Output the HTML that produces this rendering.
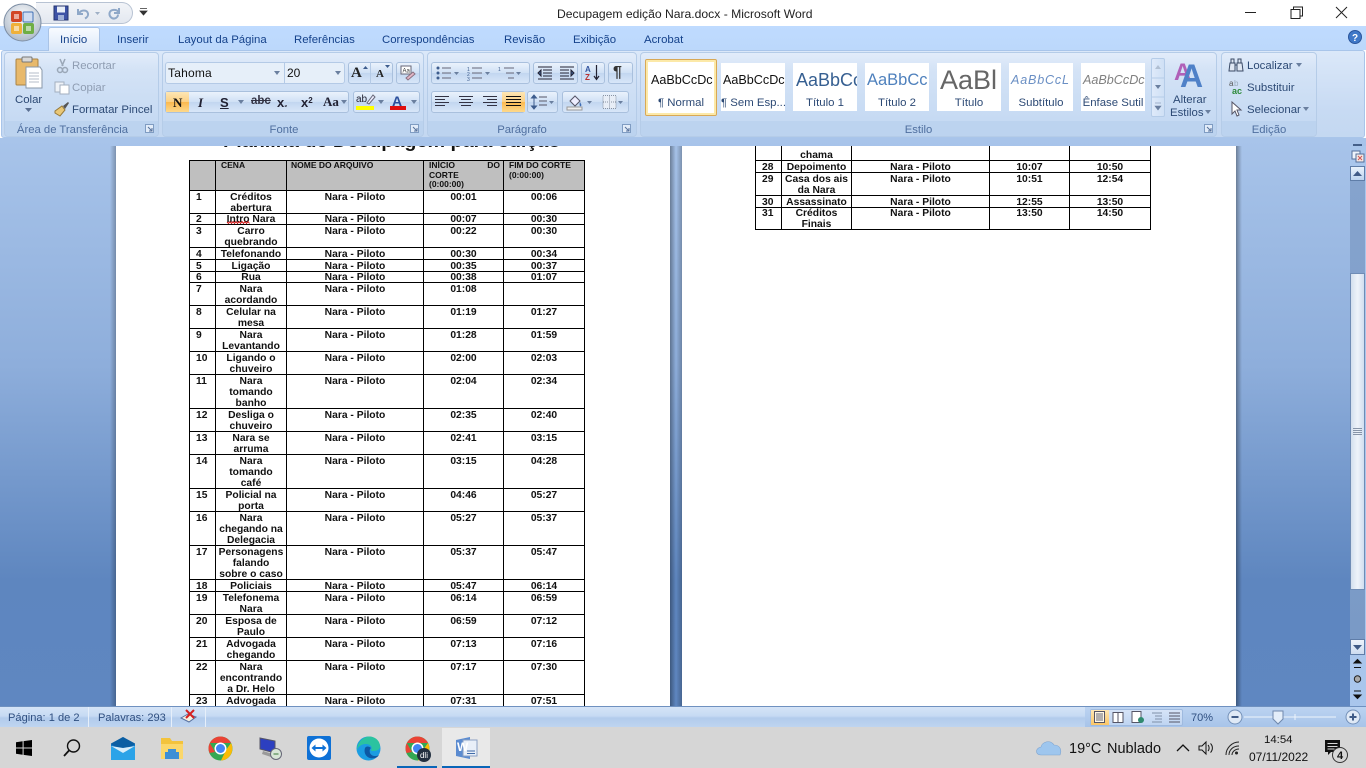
<!DOCTYPE html>
<html lang="pt"><head><meta charset="utf-8"><title>Decupagem edição Nara.docx - Microsoft Word</title>
<style>
*{box-sizing:border-box}
html,body{margin:0;padding:0;width:1366px;height:768px;overflow:hidden;background:#fff;font-family:"Liberation Sans",sans-serif}
.a{position:absolute}
.t{position:absolute;white-space:nowrap;font-size:11.4px;line-height:14px;color:#2d4a75;margin-top:1px}
.z{margin-top:0}
.g{color:#8f9db2}
.lb{position:absolute;text-align:center;font-size:11.3px;line-height:14px;color:#4f6f9f;top:123px}
.grp{position:absolute;top:52px;height:85px;border:1px solid #b5cce8;border-radius:4px;background:linear-gradient(#e2ecfa 0,#d4e3f6 20%,#c6daf3 80%,#c0d6f1 100%)}
.grp i{position:absolute;left:0;right:0;bottom:0;height:15px;background:#bcd3ef;border-radius:0 0 3px 3px}
.bx{position:absolute;border:1px solid #a9c0dd;border-radius:3px;background:linear-gradient(#eaf2fc,#cfe0f5 50%,#c2d6f0 51%,#d8e6f8)}
.sty{position:absolute;top:63px;width:64px;height:48px;background:#fff;text-align:center;overflow:hidden}
.sty b{display:block;font-weight:normal;height:32px;line-height:35px;white-space:nowrap;overflow:hidden;font-size:12.6px;color:#111;text-align:left;padding-left:2px}
.sty span{display:block;font-size:11.4px;line-height:14px;color:#2d4a75;white-space:nowrap;margin-top:1px}
table{position:absolute;border-collapse:collapse;table-layout:fixed;font-family:"Liberation Sans",sans-serif;font-weight:bold;font-size:10.3px;line-height:11px;color:#111}
td{border:1px solid #000;padding:1px 3px 0;vertical-align:top;text-align:center}
td::after{content:"";display:block;margin-top:-1px}
td:first-child{text-align:left;padding:1px 0 0 6px}
td.n{padding:1px 0 0}
tr.s td{line-height:10px}
tr.h td{background:#bfbfbf;text-align:left;font-size:8.5px;line-height:9.6px;padding-top:0}
tr.h td::after{margin-top:0}
svg{position:absolute;overflow:visible}
</style></head><body>

<!-- document area -->
<div class="a" style="left:0;top:138px;width:1366px;height:568px;background:linear-gradient(#a8c4ea 0,#8eaedb 40%,#5e86bf 78%,#5f87c1 100%)"></div>
<div class="a" style="left:110px;top:146px;width:6px;height:560px;background:linear-gradient(90deg,rgba(0,0,0,0),rgba(0,0,0,.25))"></div>
<div class="a" style="left:670px;top:146px;width:6px;height:560px;background:linear-gradient(90deg,rgba(0,0,0,.35),rgba(0,0,0,0))"></div>
<div class="a" style="left:676px;top:146px;width:6px;height:560px;background:linear-gradient(90deg,rgba(0,0,0,0),rgba(0,0,0,.25))"></div>
<div class="a" style="left:1236px;top:146px;width:6px;height:560px;background:linear-gradient(90deg,rgba(0,0,0,.35),rgba(0,0,0,0))"></div>

<!-- page 1 -->
<div class="a" style="left:116px;top:146px;width:554px;height:560px;background:#fff;overflow:hidden">
<div class="a" style="left:107px;top:-15px;font-weight:bold;font-size:19.8px;line-height:20px;color:#111;white-space:nowrap">Planilha de Decupagem para edição</div>
<table style="left:73px;top:14px;width:395px">
<colgroup><col style="width:26px"><col style="width:71px"><col style="width:137px"><col style="width:80px"><col style="width:81px"></colgroup>
<tr class="h" style="height:30px"><td></td><td style="padding-left:5px">CENA</td><td style="padding-left:4px">NOME DO ARQUIVO</td><td style="padding-left:5px">INÍCIO <span style="float:right">DO</span><br>CORTE<br>(0:00:00)</td><td style="padding-left:5px">FIM DO CORTE<br>(0:00:00)</td></tr>
<tr><td>1</td><td>Créditos<br>abertura</td><td>Nara - Piloto</td><td>00:01</td><td>00:06</td></tr>
<tr class="s"><td>2</td><td>Intro Nara</td><td>Nara - Piloto</td><td>00:07</td><td>00:30</td></tr>
<tr><td>3</td><td>Carro<br>quebrando</td><td>Nara - Piloto</td><td>00:22</td><td>00:30</td></tr>
<tr><td>4</td><td>Telefonando</td><td>Nara - Piloto</td><td>00:30</td><td>00:34</td></tr>
<tr><td>5</td><td>Ligação</td><td>Nara - Piloto</td><td>00:35</td><td>00:37</td></tr>
<tr class="s"><td>6</td><td>Rua</td><td>Nara - Piloto</td><td>00:38</td><td>01:07</td></tr>
<tr><td>7</td><td>Nara<br>acordando</td><td>Nara - Piloto</td><td>01:08</td><td></td></tr>
<tr><td>8</td><td>Celular na<br>mesa</td><td>Nara - Piloto</td><td>01:19</td><td>01:27</td></tr>
<tr><td>9</td><td>Nara<br>Levantando</td><td>Nara - Piloto</td><td>01:28</td><td>01:59</td></tr>
<tr><td>10</td><td>Ligando o<br>chuveiro</td><td>Nara - Piloto</td><td>02:00</td><td>02:03</td></tr>
<tr><td>11</td><td>Nara<br>tomando<br>banho</td><td>Nara - Piloto</td><td>02:04</td><td>02:34</td></tr>
<tr><td>12</td><td>Desliga o<br>chuveiro</td><td>Nara - Piloto</td><td>02:35</td><td>02:40</td></tr>
<tr><td>13</td><td>Nara se<br>arruma</td><td>Nara - Piloto</td><td>02:41</td><td>03:15</td></tr>
<tr><td>14</td><td>Nara<br>tomando<br>café</td><td>Nara - Piloto</td><td>03:15</td><td>04:28</td></tr>
<tr><td>15</td><td>Policial na<br>porta</td><td>Nara - Piloto</td><td>04:46</td><td>05:27</td></tr>
<tr><td>16</td><td class="n">Nara<br>chegando na<br>Delegacia</td><td>Nara - Piloto</td><td>05:27</td><td>05:37</td></tr>
<tr><td>17</td><td class="n">Personagens<br>falando<br>sobre o caso</td><td>Nara - Piloto</td><td>05:37</td><td>05:47</td></tr>
<tr><td>18</td><td>Policiais</td><td>Nara - Piloto</td><td>05:47</td><td>06:14</td></tr>
<tr><td>19</td><td>Telefonema<br>Nara</td><td>Nara - Piloto</td><td>06:14</td><td>06:59</td></tr>
<tr><td>20</td><td>Esposa de<br>Paulo</td><td>Nara - Piloto</td><td>06:59</td><td>07:12</td></tr>
<tr><td>21</td><td>Advogada<br>chegando</td><td>Nara - Piloto</td><td>07:13</td><td>07:16</td></tr>
<tr><td>22</td><td class="n">Nara<br>encontrando<br>a Dr. Helo</td><td>Nara - Piloto</td><td>07:17</td><td>07:30</td></tr>
<tr><td>23</td><td>Advogada<br>&nbsp;</td><td>Nara - Piloto</td><td>07:31</td><td>07:51</td></tr>
</table>
<svg style="left:111px;top:75px" width="24" height="3"><path d="M0 1l1.500 1.500L3 .5l1.500 2L6 .5l1.500 2L9 .5l1.500 2L12 .5l1.500 2L15 .5l1.500 2L18 .5l1.500 2L21 .5l1.500 2" fill="none" stroke="#c00" stroke-width=".9"/></svg>
</div>

<!-- page 2 -->
<div class="a" style="left:682px;top:146px;width:554px;height:560px;background:#fff;overflow:hidden">
<table style="left:73px;top:-9px;width:395px">
<colgroup><col style="width:26px"><col style="width:70px"><col style="width:138px"><col style="width:80px"><col style="width:81px"></colgroup>
<tr><td></td><td>&nbsp;<br>chama</td><td></td><td></td><td></td></tr>
<tr><td>28</td><td class="n">Depoimento</td><td>Nara - Piloto</td><td>10:07</td><td>10:50</td></tr>
<tr><td>29</td><td class="n">Casa dos ais<br>da Nara</td><td>Nara - Piloto</td><td>10:51</td><td>12:54</td></tr>
<tr><td>30</td><td class="n">Assassinato</td><td>Nara - Piloto</td><td>12:55</td><td>13:50</td></tr>
<tr style="line-height:10.500px"><td>31</td><td>Créditos<br>Finais</td><td>Nara - Piloto</td><td>13:50</td><td>14:50</td></tr>
</table>
</div>

<!-- vertical scrollbar -->
<div class="a" style="left:1350px;top:146px;width:16px;height:560px;background:#a9c6ec"></div>
<div class="a" style="left:1350px;top:181px;width:15px;height:459px;background:linear-gradient(#85a3cd,#7a9ac6)"></div>
<div class="a" style="left:1353px;top:144px;width:9px;height:2px;background:#45608a"></div>
<svg style="left:1351px;top:150px" width="14" height="14"><rect x="1" y="1" width="8" height="8" fill="#eef4fb" stroke="#55709a"/><rect x="5" y="4" width="8" height="8" fill="#f6e9e4" stroke="#55709a"/><path d="M7 6l4 4M11 6l-4 4" stroke="#c55" stroke-width="1"/></svg>
<div class="a" style="left:1350px;top:166px;width:15px;height:15px;border:1px solid #5f7da8;background:linear-gradient(#e9f2fc,#bcd3ef)"></div>
<svg style="left:1350px;top:166px" width="15" height="15"><path d="M3 10l4.500-5 4.500 5z" fill="#3f5a86"/></svg>
<div class="a" style="left:1350px;top:273px;width:15px;height:317px;border:1px solid #6f8cb5;background:linear-gradient(90deg,#d3dfee,#eef3f9 50%,#d2def0)"></div>
<svg style="left:1353px;top:428px" width="9" height="8"><path d="M0 .5h9M0 2.500h9M0 4.500h9M0 6.500h9" stroke="#8794a8"/></svg>
<div class="a" style="left:1350px;top:639px;width:15px;height:16px;border:1px solid #5f7da8;background:linear-gradient(#edf3fb,#cddcf0)"></div>
<svg style="left:1350px;top:639px" width="15" height="16"><path d="M3 6l4.500 5 4.500-5z" fill="#3f5a86"/></svg>
<svg style="left:1352px;top:659px" width="12" height="44"><path d="M2 4l3.500-3.500L9 4zM2 8.500h7" fill="#111" stroke="#111"/><circle cx="5.500" cy="20" r="3.200" fill="#aaa" stroke="#222"/><path d="M2 36l3.500 3.500L9 36zM2 32h7M2 36h7" fill="#111" stroke="#111"/></svg>

<!-- title bar -->
<div class="a" style="left:0;top:0;width:1366px;height:26px;background:#fff"></div>
<div class="t z" style="left:557px;top:7px;color:#222;font-size:12.15px">Decupagem edição Nara.docx - Microsoft Word</div>
<svg style="left:1240px;top:4px" width="126" height="18"><path d="M5 8.500h11" stroke="#222"/><path d="M51 5.500h9v9h-9zM53.500 5.500v-2.500h9v9h-2.500" fill="none" stroke="#222"/><path d="M96 3l11 11M107 3l-11 11" stroke="#222"/></svg>

<!-- QAT -->
<div class="a" style="left:36px;top:2px;width:97px;height:22px;border:1px solid #b8c3d3;border-left:none;border-radius:0 12px 12px 0;background:linear-gradient(#f2f4f8,#e3e8f0)"></div>
<svg style="left:53px;top:5px" width="16" height="16"><rect x="1" y="1" width="14" height="14" fill="#3d52a6" stroke="#23346f"/><rect x="4" y="1.500" width="8" height="6" fill="#e8eef8"/><rect x="5" y="10" width="6" height="5" fill="#9fb0d8"/></svg>
<svg style="left:75px;top:5px" width="60" height="16"><path d="M3 4v5h5M4 8.500c2-4 8-4 9 0 .5 2-1 4-3 5" fill="none" stroke="#8fa8c8" stroke-width="2"/><path d="M20 7l2.500 3 2.500-3z" fill="#9fb0c6"/><path d="M44 3v5h-5M43.500 7c-2-3-8-3-9 1-.5 3 2 6 5 5.500 2-.3 3.500-2 3.500-4" fill="none" stroke="#8fa8c8" stroke-width="2"/></svg>
<svg style="left:139px;top:7px" width="9" height="10"><path d="M1 1.500h7M1 4l3.500 4L8 4z" fill="#333" stroke="#333" stroke-width=".8"/></svg>

<!-- tabs row -->
<div class="a" style="left:0;top:26px;width:1366px;height:24px;background:linear-gradient(#bfdbff,#bcd8fb)"></div>
<!-- ribbon body -->
<div class="a" style="left:1px;top:50px;width:1364px;height:88px;background:linear-gradient(#dbe8f9,#c7daf3 70%,#c4d8f1);border:1px solid #a9c5ea;border-radius:3px"></div>
<div class="a" style="left:48px;top:27px;width:52px;height:24px;background:linear-gradient(#f8fbff,#dbe8f9);border:1px solid #a9c3e6;border-bottom:none;border-radius:3px 3px 0 0"></div>
<div class="t" style="left:60px;top:32px;color:#15428b">Início</div>
<div class="t" style="left:117px;top:32px;color:#15428b">Inserir</div>
<div class="t" style="left:178px;top:32px;color:#15428b">Layout da Página</div>
<div class="t" style="left:294px;top:32px;color:#15428b">Referências</div>
<div class="t" style="left:382px;top:32px;color:#15428b">Correspondências</div>
<div class="t" style="left:504px;top:32px;color:#15428b">Revisão</div>
<div class="t" style="left:573px;top:32px;color:#15428b">Exibição</div>
<div class="t" style="left:644px;top:32px;color:#15428b">Acrobat</div>
<svg style="left:1348px;top:30px" width="14" height="14"><circle cx="7" cy="7" r="6.500" fill="#3f78c8" stroke="#2a559c"/><text x="7" y="11" font-family="Liberation Sans" font-size="10" font-weight="bold" fill="#fff" text-anchor="middle">?</text></svg>

<!-- office button -->
<svg style="left:3px;top:3px" width="40" height="40"><defs><radialGradient id="ob" cx=".5" cy=".35" r=".7"><stop offset="0" stop-color="#fff"/><stop offset="1" stop-color="#a9b6c6"/></radialGradient></defs><circle cx="19.500" cy="19.500" r="18.500" fill="url(#ob)" stroke="#7d8ea4"/><rect x="8" y="8" width="11" height="11" rx="2" fill="#d24726"/><rect x="20" y="9" width="10" height="10" rx="1" fill="#cfdcf0" stroke="#3f6fb5"/><rect x="8" y="20" width="11" height="11" rx="2" fill="#f0b13a"/><rect x="20" y="20" width="11" height="11" rx="2" fill="#6fae45"/><path d="M11 11h5v5h-5zM23 23h5v5h-5zM11 23h5v5h-5z" fill="#fff" opacity=".55"/></svg>

<!-- groups -->
<div class="grp" style="left:4px;width:155px"><i></i></div>
<div class="grp" style="left:162px;width:262px"><i></i></div>
<div class="grp" style="left:427px;width:210px"><i></i></div>
<div class="grp" style="left:640px;width:577px"><i></i></div>
<div class="grp" style="left:1221px;width:96px"><i></i></div>
<div class="lb" style="left:4px;width:137px">Área de Transferência</div>
<div class="lb" style="left:162px;width:244px">Fonte</div>
<div class="lb" style="left:427px;width:190px">Parágrafo</div>
<div class="lb" style="left:640px;width:557px">Estilo</div>
<div class="lb" style="left:1221px;width:96px">Edição</div>
<svg style="left:145px;top:124px" width="10" height="10"><path d="M.5.500h8v8h-8z" fill="#e2ecf9" stroke="#7f9cc2"/><path d="M3 3l4 4M7 4v3H4" fill="none" stroke="#56719a"/></svg>
<svg style="left:410px;top:124px" width="10" height="10"><path d="M.5.500h8v8h-8z" fill="#e2ecf9" stroke="#7f9cc2"/><path d="M3 3l4 4M7 4v3H4" fill="none" stroke="#56719a"/></svg>
<svg style="left:622px;top:124px" width="10" height="10"><path d="M.5.500h8v8h-8z" fill="#e2ecf9" stroke="#7f9cc2"/><path d="M3 3l4 4M7 4v3H4" fill="none" stroke="#56719a"/></svg>
<svg style="left:1204px;top:124px" width="10" height="10"><path d="M.5.500h8v8h-8z" fill="#e2ecf9" stroke="#7f9cc2"/><path d="M3 3l4 4M7 4v3H4" fill="none" stroke="#56719a"/></svg>

<!-- clipboard -->
<svg style="left:15px;top:56px" width="28" height="34"><rect x="1" y="3" width="22" height="26" rx="1" fill="#e8b96b" stroke="#a98345"/><rect x="7" y="1" width="10" height="5" rx="1" fill="#d8d8d8" stroke="#777"/><path d="M11 11h14l2 3v18H11z" fill="#fff" stroke="#8a98aa"/><path d="M14 17h10M14 20h10M14 23h10M14 26h10" stroke="#b4bdca"/></svg>
<div class="t" style="left:15px;top:92px">Colar</div>
<svg style="left:25px;top:108px" width="7" height="4"><path d="M0 0h7L3.500 4z" fill="#5b7092"/></svg>
<svg style="left:55px;top:58px" width="16" height="16"><path d="M5 1l3 7M10 1L7 8" stroke="#9aa7b7" stroke-width="1.500"/><circle cx="5" cy="12" r="2.500" fill="none" stroke="#9aa7b7" stroke-width="1.500"/><circle cx="10" cy="12" r="2.500" fill="none" stroke="#9aa7b7" stroke-width="1.500"/></svg>
<div class="t g" style="left:72px;top:58px">Recortar</div>
<svg style="left:54px;top:80px" width="16" height="15"><rect x="1" y="2" width="9" height="10" fill="#eef2f7" stroke="#a3afbf"/><rect x="6" y="5" width="9" height="9" fill="#fff" stroke="#a3afbf"/></svg>
<div class="t g" style="left:72px;top:80px">Copiar</div>
<svg style="left:54px;top:101px" width="16" height="16"><path d="M1 10l7-5 3 4-5 6-5-3z" fill="#e9c777" stroke="#96793a"/><path d="M9 5l5-4 1 1-4 6z" fill="#555"/></svg>
<div class="t" style="left:72px;top:102px">Formatar Pincel</div>

<!-- font -->
<div class="a" style="left:165px;top:62px;width:120px;height:22px;background:#e6eff9;border:1px solid #b4cae6;border-right:none;border-radius:3px 0 0 3px"></div>
<div class="a" style="left:284px;top:62px;width:61px;height:22px;background:#e6eff9;border:1px solid #b4cae6;border-radius:0 3px 3px 0"></div>
<div class="t z" style="left:168px;top:66px;color:#111;font-size:12px;letter-spacing:.2px">Tahoma</div>
<div class="t z" style="left:287px;top:66px;color:#111;font-size:12px">20</div>
<svg style="left:274px;top:71px" width="6" height="4"><path d="M0 0h6L3 4z" fill="#6a7f9f"/></svg>
<svg style="left:335px;top:71px" width="6" height="4"><path d="M0 0h6L3 4z" fill="#6a7f9f"/></svg>
<div class="bx" style="left:348px;top:62px;width:45px;height:22px"></div>
<div class="a" style="left:370px;top:62px;width:1px;height:22px;background:#b4cae6"></div>
<div class="t z" style="left:351px;top:65px;font:bold 15px 'Liberation Serif',serif;color:#222">A</div>
<svg style="left:362px;top:65px" width="8" height="4"><path d="M1 4l2.500-3L6 4z" fill="#3d5c8d"/></svg>
<div class="t z" style="left:376px;top:68px;font:bold 11px 'Liberation Serif',serif;color:#222">A</div>
<svg style="left:384px;top:65px" width="8" height="4"><path d="M1 0l2.500 3L6 0z" fill="#3d5c8d"/></svg>
<div class="bx" style="left:396px;top:62px;width:24px;height:22px"></div>
<svg style="left:399px;top:64px" width="18" height="18"><rect x="2" y="2" width="10" height="8" fill="#fff" stroke="#667"/><text x="3.500" y="8.500" font-size="6" font-family="Liberation Sans" fill="#333">Aa</text><path d="M7 14l7-6 2 2-7 6z" fill="#e3b7c7" stroke="#8a7080"/></svg>

<div class="bx" style="left:165px;top:91px;width:184px;height:22px"></div>
<div class="a" style="left:166px;top:92px;width:23px;height:20px;background:linear-gradient(#fde6b4,#fcd084 50%,#fbb94f 51%,#fdd98c)"></div>
<div class="t z" style="left:173px;top:95px;font:bold 13px 'Liberation Serif',serif;color:#111">N</div>
<div class="t z" style="left:198px;top:95px;font:italic bold 13px 'Liberation Serif',serif;color:#223">I</div>
<div class="t z" style="left:220px;top:95px;font:bold 13px 'Liberation Sans',sans-serif;color:#223;text-decoration:underline">S</div>
<svg style="left:238px;top:100px" width="6" height="4"><path d="M0 0h6L3 4z" fill="#6a7f9f"/></svg>
<div class="t z" style="left:251px;top:95px;font:bold 11.5px 'Liberation Sans',sans-serif;color:#334;text-decoration:line-through">abc</div>
<div class="t z" style="left:277px;top:95px;font:bold 13px 'Liberation Sans',sans-serif;color:#223">x<span style="font-size:7px">₂</span></div>
<div class="t z" style="left:301px;top:95px;font:bold 13px 'Liberation Sans',sans-serif;color:#223">x<span style="font-size:8px;vertical-align:4px">2</span></div>
<div class="t z" style="left:323px;top:94px;font:bold 13px 'Liberation Serif',serif;color:#223">Aa</div>
<svg style="left:341px;top:100px" width="6" height="4"><path d="M0 0h6L3 4z" fill="#6a7f9f"/></svg>
<div class="bx" style="left:353px;top:91px;width:67px;height:22px"></div>
<div class="t z" style="left:356px;top:93px;font-size:10px;color:#223">ab</div>
<svg style="left:366px;top:94px" width="10" height="11"><path d="M1 9l6-8 2 2-6 7z" fill="#eef" stroke="#667"/></svg>
<div class="a" style="left:356px;top:106px;width:18px;height:4px;background:#ff0"></div>
<svg style="left:378px;top:100px" width="6" height="4"><path d="M0 0h6L3 4z" fill="#6a7f9f"/></svg>
<div class="t z" style="left:392px;top:93px;font:bold 14px 'Liberation Sans',sans-serif;color:#2b4f9c">A</div>
<div class="a" style="left:390px;top:106px;width:16px;height:4px;background:#e01010"></div>
<svg style="left:411px;top:100px" width="6" height="4"><path d="M0 0h6L3 4z" fill="#6a7f9f"/></svg>

<!-- paragraph -->
<div class="bx" style="left:431px;top:62px;width:99px;height:22px"></div>
<svg style="left:435px;top:65px" width="92" height="16"><g fill="#3d5c8d"><circle cx="3" cy="3" r="1.500"/><circle cx="3" cy="8" r="1.500"/><circle cx="3" cy="13" r="1.500"/></g><path d="M7 3h9M7 8h9M7 13h9" stroke="#667" /><path d="M19 7h5l-2.500 3z" fill="#6a7f9f"/><text x="32" y="6" font-size="5" fill="#3d5c8d">1</text><text x="32" y="11" font-size="5" fill="#3d5c8d">2</text><text x="32" y="16" font-size="5" fill="#3d5c8d">3</text><path d="M37 3h10M37 8h10M37 13h10" stroke="#667"/><path d="M50 7h5l-2.500 3z" fill="#6a7f9f"/><text x="63" y="6" font-size="5" fill="#3d5c8d">1</text><path d="M69 3h10M71 8h8M73 13h6" stroke="#667"/><path d="M81 7h5l-2.500 3z" fill="#6a7f9f"/></svg>
<div class="bx" style="left:533px;top:62px;width:45px;height:22px"></div>
<svg style="left:537px;top:66px" width="38" height="14"><path d="M1 1h14M6 4h9M6 7h9M6 10h9M1 13h14M1 7l3-3v6z" stroke="#223" fill="#3d5c8d" stroke-width="1"/><path d="M23 1h14M23 4h9M23 7h9M23 10h9M23 13h14M37 7l-3-3v6z" stroke="#223" fill="#3d5c8d" stroke-width="1"/></svg>
<div class="bx" style="left:581px;top:62px;width:24px;height:22px"></div>
<svg style="left:585px;top:64px" width="16" height="18"><text x="0" y="8" font-size="8" font-weight="bold" font-family="Liberation Sans" fill="#3456a0">A</text><text x="0" y="16" font-size="8" font-weight="bold" font-family="Liberation Sans" fill="#b83030">Z</text><path d="M11.500 1v14M9 12l2.500 3.500L14 12" fill="none" stroke="#223" stroke-width="1.200"/></svg>
<div class="bx" style="left:608px;top:62px;width:25px;height:22px"></div>
<div class="t z" style="left:613px;top:64px;font:bold 16px 'Liberation Sans',sans-serif;color:#333">¶</div>
<div class="bx" style="left:431px;top:91px;width:94px;height:22px"></div>
<div class="a" style="left:502px;top:92px;width:23px;height:20px;background:linear-gradient(#fde6b4,#fcd084 50%,#fbb94f 51%,#fdd98c)"></div>
<svg style="left:435px;top:96px" width="90" height="12"><path d="M0 .5h14M0 3.500h10M0 6.500h14M0 9.500h10" stroke="#334"/><path d="M24 .5h14M26 3.500h10M24 6.500h14M26 9.500h10" stroke="#334"/><path d="M48 .5h14M52 3.500h10M48 6.500h14M52 9.500h10" stroke="#334"/><path d="M71 .5h15M71 3.500h15M71 6.500h15M71 9.500h15" stroke="#111"/></svg>
<div class="bx" style="left:527px;top:91px;width:31px;height:22px"></div>
<svg style="left:531px;top:94px" width="24" height="16"><path d="M3 1L.5 4h5zM3 15L.5 12h5zM3 4v8" fill="#3d5c8d" stroke="#3d5c8d"/><path d="M8 3h8M8 7h8M8 11h8" stroke="#556"/><path d="M18 7h5l-2.500 3z" fill="#6a7f9f"/></svg>
<div class="bx" style="left:562px;top:91px;width:67px;height:22px"></div>
<svg style="left:566px;top:93px" width="60" height="18"><path d="M4 8l5-5 5 5-5 5z" fill="#eef" stroke="#556"/><path d="M14 9c1 2 2 3 1 4s-2-1-1-4z" fill="#3d6cb5"/><rect x="1" y="14" width="15" height="3" fill="#eee" stroke="#999"/><path d="M21 8h5l-2.500 3z" fill="#6a7f9f"/><path d="M37 2.500h13v13h-13zM43.500 2.500v13M37 9h13" fill="#e8eef7" stroke="#8893a3" stroke-dasharray="1 1"/><path d="M52 8h5l-2.500 3z" fill="#6a7f9f"/></svg>

<!-- styles -->
<div class="a" style="left:645px;top:59px;width:72px;height:57px;border:1px solid #d8a856;border-radius:2px;background:#fff;box-shadow:inset 0 0 0 2px #fce9a8"></div>
<div class="sty" style="left:649px"><b>AaBbCcDc</b><span>¶ Normal</span></div>
<div class="sty" style="left:721px"><b>AaBbCcDc</b><span>¶ Sem Esp...</span></div>
<div class="sty" style="left:793px"><b style="color:#365f91;font-size:18px;padding-left:3px">AaBbCc</b><span>Título 1</span></div>
<div class="sty" style="left:865px"><b style="color:#4f81bd;font-size:16.5px">AaBbCc</b><span>Título 2</span></div>
<div class="sty" style="left:937px"><b style="color:#666;font-size:27px;padding-left:3px">AaBl</b><span>Título</span></div>
<div class="sty" style="left:1009px"><b style="color:#6a8fc4;font-style:italic;letter-spacing:.8px">AaBbCcL</b><span>Subtítulo</span></div>
<div class="sty" style="left:1081px"><b style="color:#808080;font-style:italic">AaBbCcDc</b><span>Ênfase Sutil</span></div>
<div class="a" style="left:1151px;top:58px;width:14px;height:59px;border:1px solid #b5cce8;border-radius:2px;background:linear-gradient(90deg,#dfeafa,#cfe0f5)"></div>
<svg style="left:1151px;top:58px" width="14" height="59"><path d="M0 20h14M0 39h14" stroke="#b5cce8"/><path d="M4 11h6L7 7z" fill="#b0bfd2"/><path d="M4 27h6l-3 4z" fill="#6a7f9f"/><path d="M4 45h6M4 48h6l-3 4z" fill="#6a7f9f" stroke="#6a7f9f" stroke-width=".6"/></svg>
<svg style="left:1174px;top:57px" width="34" height="32"><text x="0" y="23" font-family="Liberation Sans" font-weight="bold" font-size="24" fill="#b060b8">A</text><text x="6" y="30" font-family="Liberation Sans" font-weight="bold" font-size="32" fill="#4f81c8">A</text></svg>
<div class="t" style="left:1173px;top:92px;">Alterar</div>
<div class="t" style="left:1170px;top:105px;">Estilos</div>
<svg style="left:1205px;top:110px" width="6" height="4"><path d="M0 0h6L3 4z" fill="#6a7f9f"/></svg>

<!-- edit -->
<svg style="left:1228px;top:57px" width="16" height="16"><path d="M2 6h5v8H1zM9 6h5l1 8H9zM3 2h3v4H3zM10 2h3v4h-3zM7 8h2" fill="#dfe7f3" stroke="#3a4a66"/></svg>
<div class="t" style="left:1247px;top:58px">Localizar</div>
<svg style="left:1296px;top:63px" width="6" height="4"><path d="M0 0h6L3 4z" fill="#6a7f9f"/></svg>
<svg style="left:1228px;top:79px" width="17" height="16"><text x="1" y="7" font-size="8" font-family="Liberation Sans" fill="#555">a</text><text x="6" y="7" font-size="8" font-family="Liberation Sans" fill="#9ab">b</text><text x="4" y="15" font-size="9" font-weight="bold" font-family="Liberation Sans" fill="#2d8a3a">ac</text></svg>
<div class="t" style="left:1247px;top:80px">Substituir</div>
<svg style="left:1231px;top:101px" width="12" height="16"><path d="M1 1v12l3-3 2 5 2-1-2-5h4z" fill="#fff" stroke="#556"/></svg>
<div class="t" style="left:1247px;top:102px">Selecionar</div>
<svg style="left:1303px;top:107px" width="6" height="4"><path d="M0 0h6L3 4z" fill="#6a7f9f"/></svg>

<!-- status bar -->
<div class="a" style="left:0;top:706px;width:1366px;height:21px;background:linear-gradient(#d5e4f7,#c6daf3 45%,#b2cbec 55%,#bed4f0);border-top:1px solid #6f91c0"></div>
<div class="t" style="left:8px;top:710px;font-size:11.1px;color:#2f4f80">Página: 1 de 2</div>
<div class="a" style="left:88px;top:707px;width:1px;height:20px;background:#e6effa"></div>
<div class="t" style="left:98px;top:710px;font-size:11.1px;color:#2f4f80">Palavras: 293</div>
<div class="a" style="left:171px;top:707px;width:1px;height:20px;background:#e6effa"></div>
<div class="a" style="left:205px;top:707px;width:1px;height:20px;background:#e6effa"></div>
<svg style="left:180px;top:708px" width="18" height="16"><path d="M1 10l7-4 8 3-7 5z" fill="#f5f0e0" stroke="#5670a0"/><path d="M6 2l8 8M14 2l-8 8" stroke="#d62020" stroke-width="2"/></svg>
<div class="a" style="left:1085px;top:707px;width:281px;height:20px;background:linear-gradient(#bcd3f1,#a8c4e9)"></div>
<div class="a" style="left:1090px;top:709px;width:93px;height:17px;background:linear-gradient(#d6e4f7,#bfd5f1);border:1px solid #9fbadf;border-radius:2px"></div>
<div class="a" style="left:1091px;top:710px;width:18px;height:15px;background:linear-gradient(#fde6b4,#fbc666)"></div>
<svg style="left:1094px;top:711px" width="86" height="13"><rect x=".5" y=".5" width="10" height="11" fill="#fff8e6" stroke="#556"/><path d="M2 3h7M2 5h7M2 7h7M2 9h7" stroke="#667"/><path d="M19 1.500h5v10h-5zM24 1.500h5v10h-5z" fill="#fff" stroke="#556"/><path d="M38 .5h9v11h-9z" fill="#fff" stroke="#556"/><circle cx="47" cy="9" r="3" fill="#2f8a6f"/><path d="M58 2h10M61 5h7M61 8h7M58 11h10" stroke="#8090a8"/><path d="M75 2h11M75 5h11M75 8h11M75 11h11" stroke="#556"/></svg>
<div class="t" style="left:1191px;top:710px;font-size:11px;color:#2f4f80">70%</div>
<svg style="left:1226px;top:708px" width="136" height="18"><circle cx="9" cy="9" r="7" fill="#dfe9f6" stroke="#7390b8"/><path d="M5.500 9h7" stroke="#3f5a86" stroke-width="2"/><path d="M18 9h92" stroke="#eef4fb"/><path d="M69 6v6" stroke="#eef4fb"/><path d="M47 3h10v8l-5 5-5-5z" fill="#e3edf9" stroke="#6f88ad"/><circle cx="127" cy="9" r="7" fill="#dfe9f6" stroke="#7390b8"/><path d="M123.500 9h7M127 5.500v7" stroke="#3f5a86" stroke-width="2"/></svg>

<!-- taskbar -->
<div class="a" style="left:0;top:727px;width:1366px;height:41px;background:#d6d6d6"></div>
<div class="a" style="left:442px;top:728px;width:48px;height:40px;background:#e9e9e9"></div>
<div class="a" style="left:397px;top:766px;width:40px;height:2px;background:#0a66b8"></div>
<div class="a" style="left:442px;top:766px;width:48px;height:2px;background:#0a66b8"></div>
<svg style="left:16px;top:740px" width="16" height="16"><path d="M0 2.200L6.600 1.300V7.500H0zM7.600 1.100L16 0V7.500H7.600zM0 8.500H6.600V14.700L0 13.800zM7.600 8.500H16V16L7.600 14.900z" fill="#000"/></svg>
<svg style="left:63px;top:739px" width="18" height="18"><circle cx="10.500" cy="7" r="6" fill="none" stroke="#111" stroke-width="1.400"/><path d="M6 11.500L1 17" stroke="#111" stroke-width="1.800"/></svg>
<svg style="left:110px;top:736px" width="26" height="24"><path d="M1 8L13 1l12 7v16H1z" fill="#0f78c9"/><path d="M1 8l12 8 12-8v-.5L13 1 1 7.500z" fill="#0b5ea3"/><path d="M1 10l12 7 12-7v14H1z" fill="#2ba3e8"/><path d="M1 10l12 7 12-7-12 2z" fill="#d8eefb"/></svg>
<svg style="left:160px;top:737px" width="24" height="22"><path d="M1 1h9l2 3h11v18H1z" fill="#f3c33c"/><path d="M1 7h22v15H1z" fill="#fbd76a"/><path d="M8 12h8v3h3v7H5v-7h3z" fill="#3d8fd6"/></svg>
<svg style="left:208px;top:736px" width="25" height="25"><circle cx="12.500" cy="12.500" r="12" fill="#34a853"/><path d="M12.500.5A12 12 0 0 1 23 7H12.500z" fill="#ea4335"/><path d="M1.800 7A12 12 0 0 1 12.500 .5V7z" fill="#ea4335"/><path d="M23 7a12 12 0 0 1-10 17.500L18 14z" fill="#fbbc05"/><path d="M1.800 7L7 16 1.500 17A12 12 0 0 1 1.800 7z" fill="#ea4335"/><circle cx="12.500" cy="12.500" r="6" fill="#fff"/><circle cx="12.500" cy="12.500" r="4.500" fill="#4285f4"/></svg>
<svg style="left:258px;top:736px" width="25" height="25"><path d="M2 2l15 3v12L2 13z" fill="#2c3fc0" stroke="#556"/><path d="M5 15l10 3-2 3-9-3z" fill="#9a9a9a"/><circle cx="18" cy="18" r="5.500" fill="#d8e6d8" stroke="#667"/><path d="M15.500 18h5" stroke="#3a7a3a"/></svg>
<svg style="left:307px;top:736px" width="24" height="24"><rect width="24" height="24" rx="2" fill="#0e71d6"/><circle cx="12" cy="12" r="9.500" fill="#fff"/><path d="M4.500 12l4-3.500V11h7V8.500l4 3.500-4 3.500V13h-7v2.500z" fill="#0e71d6"/></svg>
<svg style="left:356px;top:736px" width="25" height="25"><circle cx="12.500" cy="12.500" r="12" fill="#1b9de2"/><path d="M1 14C1 6 8 .5 13 .5c6 0 11 4 11 10 0 3-3 4.500-7 4.500-1 0-2 0-2-1 2-3-1-6-5-6-5 0-8 3-9 6z" fill="#2bc3a0"/><path d="M9 12c-2 6 3 12 10 10 2-.5 3-1.500 4-3-3 2-8 1-9-2-.5-2-.5-4 1-5-2-2-5-2-6 0z" fill="#0c59a4"/></svg>
<svg style="left:405px;top:736px" width="27" height="27"><circle cx="12.500" cy="12.500" r="12" fill="#34a853"/><path d="M12.500.5A12 12 0 0 1 23 7H12.500zM1.800 7A12 12 0 0 1 12.500 .5V7zM1.800 7L7 16 1.500 17A12 12 0 0 1 1.800 7z" fill="#ea4335"/><path d="M23 7a12 12 0 0 1-10 17.500L18 14z" fill="#fbbc05"/><circle cx="12.500" cy="12.500" r="6" fill="#fff"/><circle cx="12.500" cy="12.500" r="4.500" fill="#4285f4"/><circle cx="19" cy="19" r="7" fill="#233040"/><text x="19" y="22" font-size="8" font-family="Liberation Sans" fill="#fff" text-anchor="middle">dli</text></svg>
<svg style="left:454px;top:736px" width="24" height="24"><path d="M2 4l14-3v22L2 20z" fill="#5b8bd0"/><path d="M9 4h14v16H9z" fill="#e9eff8" stroke="#8aa0c4"/><path d="M13 15h8M13 17.500h8" stroke="#3f6aa8"/><text x="3" y="15" font-family="Liberation Sans" font-weight="bold" font-size="12" fill="#fff">W</text></svg>

<!-- tray -->
<svg style="left:1036px;top:738px" width="26" height="18"><path d="M5 17c-6 0-6-7 0-8 1-5 9-8 13-2 6 0 8 5 6 10z" fill="#9ec6ee" stroke="#7ea4d0" stroke-width=".6"/></svg>
<div class="t z" style="left:1069px;top:741px;font-size:14.500px;line-height:17px;color:#111">19°C</div>
<div class="t z" style="left:1107px;top:741px;font-size:14.500px;line-height:17px;color:#111">Nublado</div>
<svg style="left:1176px;top:743px" width="14" height="9"><path d="M1 8l6-6 6 6" fill="none" stroke="#111" stroke-width="1.300"/></svg>
<svg style="left:1198px;top:741px" width="17" height="14"><path d="M1 5h3l4-4v12L4 9H1z" fill="none" stroke="#111"/><path d="M10 4c1.500 1.500 1.500 4.500 0 6M12.500 2.500c2.500 2.500 2.500 6.500 0 9" fill="none" stroke="#111"/></svg>
<svg style="left:1225px;top:741px" width="15" height="15"><path d="M1 14C1 7 7 1 14 1M4 14c0-5 4-9 10-9M7 14c0-3 3-6 7-6" fill="none" stroke="#222"/><circle cx="11.500" cy="12" r="1.500" fill="#222"/></svg>
<div class="t" style="left:1264px;top:732px;font-size:11.4px;color:#111">14:54</div>
<div class="t z" style="left:1249px;top:750px;font-size:12px;color:#111">07/11/2022</div>
<svg style="left:1324px;top:739px" width="26" height="26"><path d="M1 1h15v12h-9l-3 3v-3H1z" fill="#111"/><path d="M3.500 4.500h10M3.500 7.500h10M3.500 10h7" stroke="#d6d6d6"/><circle cx="16" cy="16" r="7.500" fill="#d6d6d6" stroke="#333"/><text x="16" y="20" font-family="Liberation Sans" font-size="11" font-weight="bold" fill="#111" text-anchor="middle">4</text></svg>
</body></html>
